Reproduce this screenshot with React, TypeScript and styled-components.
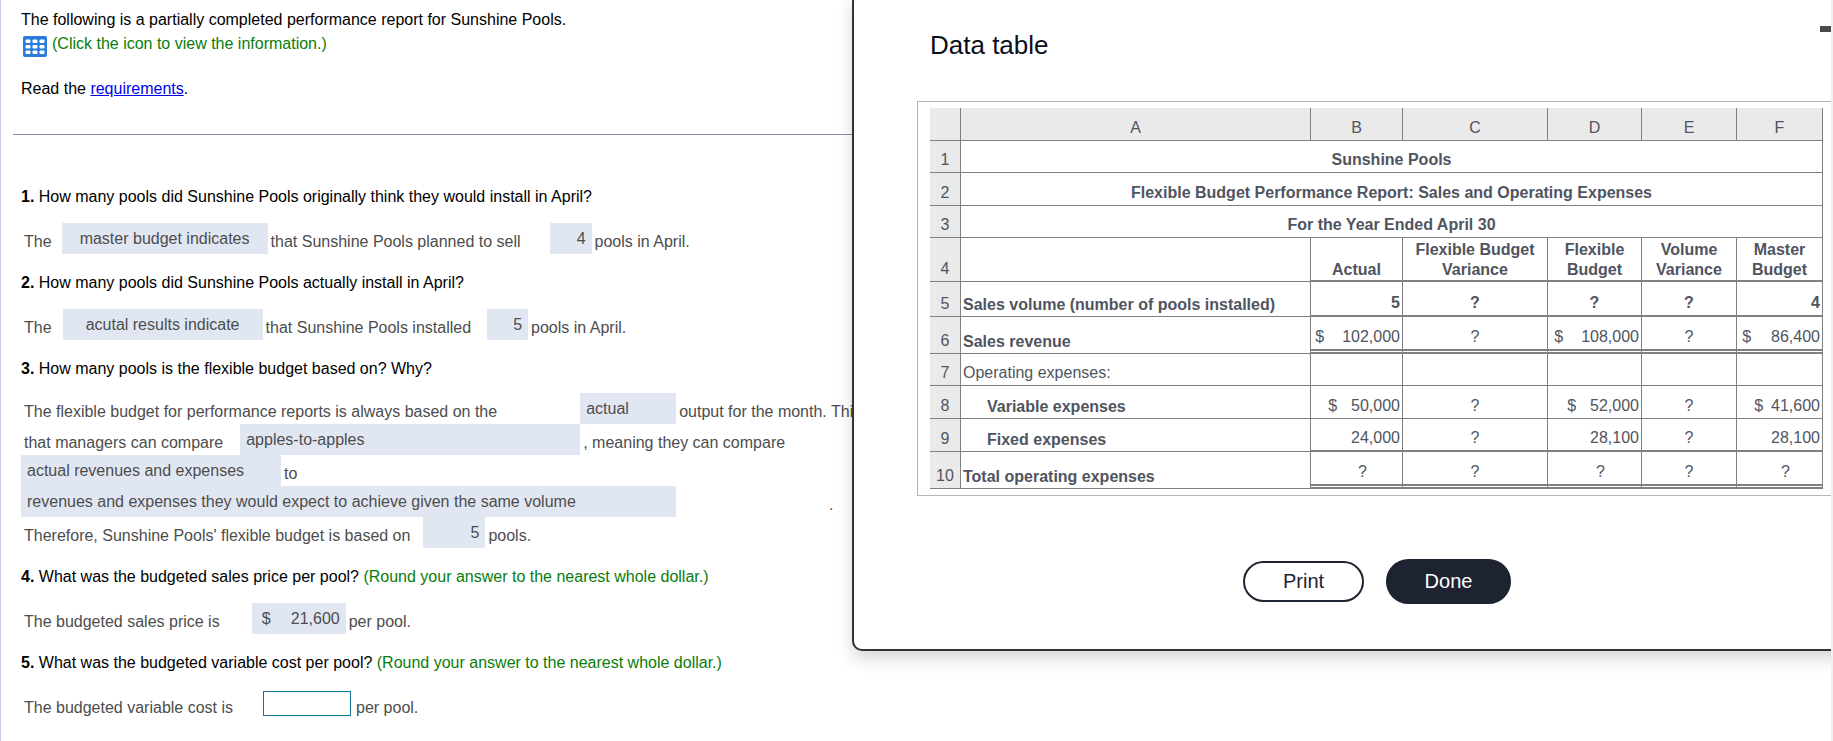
import React from "react";
import styled, { createGlobalStyle } from "styled-components";

const GlobalStyle = createGlobalStyle`
  *, *::before, *::after { box-sizing: border-box; }
  body {
    margin: 0;
    background: #fff;
    font-family: "Liberation Sans", Arial, Helvetica, sans-serif;
    font-size: 16px;
    line-height: 20px;
  }
`;

const Page = styled.div`
  position: relative;
  min-height: 100vh;
  overflow: hidden;
  border-left: 1px solid #c5cbdf;
  border-right: 2px solid #f1f1f1;
`;

const Worksheet = styled.main`
  padding: 10px 0 24px 12px;
  color: #000;
  white-space: nowrap;
`;

const Intro = styled.header`
  padding: 0 8px 35px;
  border-bottom: 1px solid #8a90a6;

  p {
    margin: 0;
  }
`;

const IconLine = styled.button`
  display: flex;
  gap: 5px;
  margin: 4px 0 22px;
  padding: 0 0 0 2px;
  border: 0;
  background: none;
  font: inherit;
  color: #0a7d0a;
  cursor: pointer;

  svg {
    margin-top: 2px;
  }
`;

const RequirementsLink = styled.a`
  color: #0000ee;
`;

const Questions = styled.section`
  padding: 33px 8px 0;
`;

const Question = styled.h2`
  margin: 19px 0 16px;
  font-size: 16px;
  font-weight: 400;
  line-height: 20px;
`;

const Hint = styled.span`
  color: #0a7d0a;
`;

const Answer = styled.div<{ $tight?: boolean }>`
  margin-top: ${(p) => (p.$tight ? "-2px" : "0")};
  color: #4d4d4d;
`;

const AnswerLine = styled.div`
  display: flex;
  height: 31px;
`;

const Words = styled.span`
  padding: 9px 3px 0;
`;

const Chip = styled.span<{ $w: number; $before?: number; $align?: string }>`
  display: flex;
  flex: none;
  justify-content: ${(p) => p.$align ?? "flex-start"};
  width: ${(p) => p.$w}px;
  margin-left: ${(p) => p.$before ?? 0}px;
  padding: 6px 6px 0;
  background: #e1e7f2;
`;

const AnswerInput = styled.input`
  width: 88px;
  height: 25px;
  margin: 2px 2px 0 27px;
  padding: 0 6px;
  border: 1px solid #147896;
  font: inherit;
  text-align: right;
`;

const Trailing = styled(Words)`
  margin-left: 150px;
`;

const Dialog = styled.section`
  position: absolute;
  top: -8px;
  left: 851px;
  right: -71px;
  padding: 36px 0 45px;
  border: 2px solid #333;
  border-radius: 10px;
  background: #fff;
  box-shadow: 0 8px 16px rgba(0, 0, 0, 0.16);
`;

const DialogHeader = styled.header`
  display: flex;
  justify-content: space-between;
  align-items: flex-start;
  padding: 0 60px 0 76px;

  h1 {
    margin: 0;
    font-size: 26px;
    font-weight: 400;
    line-height: 30px;
    color: #0a0e1c;
  }
`;

const MinimizeButton = styled.button`
  display: flex;
  margin: -4px 0 0;
  padding: 0;
  border: 0;
  background: none;
`;

const TableFrame = styled.div`
  margin: 41px 0 0 63px;
  padding: 6px 12px;
  border: 1px solid #b5b5b5;
`;

const Sheet = styled.table`
  table-layout: fixed;
  width: 893px;
  border-collapse: separate;
  border-spacing: 0;
  color: #505460;

  th,
  td {
    padding: 0 2px 2px;
    border: 0 solid #808080;
    border-width: 0 1px 1px 0;
    vertical-align: bottom;
    text-align: center;
    font-weight: 400;
  }
`;

const Row = styled.tr<{ $h: number }>`
  height: ${(p) => p.$h}px;
`;

const HeadCell = styled.th`
  && {
    background: #eaeaea;
  }
`;

const TitleCell = styled.td`
  && {
    font-weight: 700;
  }
`;

const LabelCell = styled.th<{ $bold?: boolean; $indent?: boolean }>`
  && {
    padding-bottom: ${(p) => (p.$bold ? 1 : 2)}px;
    padding-left: ${(p) => (p.$indent ? 26 : 2)}px;
    text-align: left;
    font-weight: ${(p) => (p.$bold ? 700 : 400)};
  }
`;

type Rule = "thin" | "thick" | "double";
const rules: Record<Rule, string> = {
  thin: "1px solid #808080",
  thick: "2px solid #808080",
  double: "5px double #808080",
};

const ValueCell = styled.td<{ $rule: Rule; $bold?: boolean; $shift?: boolean }>`
  && {
    border-bottom: ${(p) => rules[p.$rule]};
    font-weight: ${(p) => (p.$bold ? 700 : 400)};
    padding-left: ${(p) => (p.$shift ? 14 : 2)}px;
  }
`;

const ColumnTitle = styled(ValueCell)`
  && {
    padding-bottom: 0;
  }
`;

const Amount = styled.span<{ $gap: number }>`
  display: flex;
  justify-content: flex-end;
  gap: ${(p) => p.$gap}px;
`;

const Actions = styled.footer`
  display: flex;
  justify-content: center;
  align-items: center;
  gap: 22px;
  margin-top: 63px;
`;

const PillButton = styled.button<{ $primary?: boolean }>`
  width: ${(p) => (p.$primary ? 125 : 121)}px;
  height: ${(p) => (p.$primary ? 45 : 41)}px;
  padding: 0 0 2px;
  border: 2px solid #1d2330;
  border-radius: 23px;
  background: ${(p) => (p.$primary ? "#1d2330" : "#fff")};
  color: ${(p) => (p.$primary ? "#fff" : "#1d2330")};
  font: inherit;
  font-size: 20px;
`;

const GridIcon = () => (
  <svg width="24" height="21" viewBox="0 0 24 21" aria-hidden="true">
    <rect width="24" height="21" rx="2" fill="#2a7bdc" />
    {[3.5, 9, 14.5].map((y) =>
      [2.5, 9.5, 16.5].map((x) => (
        <rect key={`${x}-${y}`} x={x} y={y} width="5" height="3.5" rx="1" fill="#fff" />
      )),
    )}
  </svg>
);

type Value = string | { text: string; gap: number } | null;
interface SheetRow {
  label: string;
  height: number;
  rule: Rule;
  bold?: boolean;
  boldValues?: boolean;
  indent?: boolean;
  shift?: boolean;
  values: Value[];
}

const sheetRows: SheetRow[] = [
  { label: "Sales volume (number of pools installed)", height: 35, rule: "thick", bold: true, boldValues: true, values: ["5", "?", "?", "?", "4"] },
  {
    label: "Sales revenue", height: 37, rule: "double", bold: true,
    values: [{ text: "102,000", gap: 18 }, "?", { text: "108,000", gap: 18 }, "?", { text: "86,400", gap: 20 }],
  },
  { label: "Operating expenses:", height: 32, rule: "thin", values: [null, null, null, null, null] },
  {
    label: "Variable expenses", height: 33, rule: "thin", bold: true, indent: true,
    values: [{ text: "50,000", gap: 14 }, "?", { text: "52,000", gap: 14 }, "?", { text: "41,600", gap: 8 }],
  },
  { label: "Fixed expenses", height: 33, rule: "thick", bold: true, indent: true, values: ["24,000", "?", "28,100", "?", "28,100"] },
  { label: "Total operating expenses", height: 37, rule: "double", bold: true, shift: true, values: ["?", "?", "?", "?", "?"] },
];

const titles: [string, number][] = [
  ["Sunshine Pools", 32],
  ["Flexible Budget Performance Report: Sales and Operating Expenses", 33],
  ["For the Year Ended April 30", 32],
];

const columnWidths = [31, 350, 92, 145, 94, 95, 86];

function CellValue({ value }: { value: Value }) {
  if (value === null || value === "?") return <>{value}</>;
  if (typeof value === "string") return <Amount $gap={0}>{value}</Amount>;
  return (
    <Amount $gap={value.gap}>
      <span>$</span>
      <span>{value.text}</span>
    </Amount>
  );
}

function DataTable() {
  return (
    <Sheet>
      <colgroup>
        {columnWidths.map((w, i) => (
          <col key={i} width={w} />
        ))}
      </colgroup>
      <thead>
        <Row $h={33}>
          {["", "A", "B", "C", "D", "E", "F"].map((c) => (
            <HeadCell key={c} scope="col">{c}</HeadCell>
          ))}
        </Row>
      </thead>
      <tbody>
        {titles.map(([text, h], i) => (
          <Row key={text} $h={h}>
            <HeadCell scope="row">{i + 1}</HeadCell>
            <TitleCell colSpan={6}>{text}</TitleCell>
          </Row>
        ))}
        <Row $h={44}>
          <HeadCell scope="row">4</HeadCell>
          <td />
          {["Actual", "Flexible Budget Variance", "Flexible Budget", "Volume Variance", "Master Budget"].map((c) => (
            <ColumnTitle key={c} $rule="thick" $bold>{c}</ColumnTitle>
          ))}
        </Row>
        {sheetRows.map((r, i) => (
          <Row key={r.label} $h={r.height}>
            <HeadCell scope="row">{i + 5}</HeadCell>
            <LabelCell scope="row" $bold={r.bold} $indent={r.indent}>{r.label}</LabelCell>
            {r.values.map((v, j) => (
              <ValueCell key={j} $rule={r.rule} $bold={r.boldValues} $shift={r.shift && j % 2 === 0}>
                <CellValue value={v} />
              </ValueCell>
            ))}
          </Row>
        ))}
      </tbody>
    </Sheet>
  );
}

export default function App() {
  return (
    <Page>
      <GlobalStyle />
      <Worksheet>
        <Intro>
          <p>The following is a partially completed performance report for Sunshine Pools.</p>
          <IconLine type="button">
            <GridIcon />
            (Click the icon to view the information.)
          </IconLine>
          <p>
            Read the <RequirementsLink href="#requirements">requirements</RequirementsLink>.
          </p>
        </Intro>

        <Questions>
          <Question><b>1.</b> How many pools did Sunshine Pools originally think they would install in April?</Question>
          <Answer>
            <AnswerLine>
              <Words>The</Words>
              <Chip $w={206} $before={7} $align="center">master budget indicates</Chip>
              <Words>that Sunshine Pools planned to sell</Words>
              <Chip $w={42} $before={26} $align="flex-end">4</Chip>
              <Words>pools in April.</Words>
            </AnswerLine>
          </Answer>

          <Question><b>2.</b> How many pools did Sunshine Pools actually install in April?</Question>
          <Answer>
            <AnswerLine>
              <Words>The</Words>
              <Chip $w={200} $before={8} $align="center">acutal results indicate</Chip>
              <Words>that Sunshine Pools installed</Words>
              <Chip $w={41} $before={13} $align="flex-end">5</Chip>
              <Words>pools in April.</Words>
            </AnswerLine>
          </Answer>

          <Question><b>3.</b> How many pools is the flexible budget based on? Why?</Question>
          <Answer $tight>
            <AnswerLine>
              <Words>The flexible budget for performance reports is always based on the</Words>
              <Chip $w={96} $before={80}>actual</Chip>
              <Words>output for the month. This is so</Words>
            </AnswerLine>
            <AnswerLine>
              <Words>that managers can compare</Words>
              <Chip $w={340} $before={14}>apples-to-apples</Chip>
              <Words>, meaning they can compare</Words>
            </AnswerLine>
            <AnswerLine>
              <Chip $w={260}>actual revenues and expenses</Chip>
              <Words>to</Words>
            </AnswerLine>
            <AnswerLine>
              <Chip $w={655}>revenues and expenses they would expect to achieve given the same volume</Chip>
              <Trailing>.</Trailing>
            </AnswerLine>
            <AnswerLine>
              <Words>Therefore, Sunshine Pools' flexible budget is based on</Words>
              <Chip $w={62} $before={10} $align="flex-end">5</Chip>
              <Words>pools.</Words>
            </AnswerLine>
          </Answer>

          <Question>
            <b>4.</b> What was the budgeted sales price per pool? <Hint>(Round your answer to the nearest whole dollar.)</Hint>
          </Question>
          <Answer>
            <AnswerLine>
              <Words>The budgeted sales price is</Words>
              <Chip $w={94} $before={29} $align="flex-end">
                <Amount $gap={20}><span>$</span><span>21,600</span></Amount>
              </Chip>
              <Words>per pool.</Words>
            </AnswerLine>
          </Answer>

          <Question>
            <b>5.</b> What was the budgeted variable cost per pool? <Hint>(Round your answer to the nearest whole dollar.)</Hint>
          </Question>
          <Answer>
            <AnswerLine>
              <Words as="label" htmlFor="variable-cost">The budgeted variable cost is</Words>
              <AnswerInput id="variable-cost" type="text" />
              <Words>per pool.</Words>
            </AnswerLine>
          </Answer>
        </Questions>
      </Worksheet>

      <Dialog role="dialog" aria-labelledby="dialog-title">
        <DialogHeader>
          <h1 id="dialog-title">Data table</h1>
          <MinimizeButton type="button" aria-label="Minimize">
            <svg width="20" height="6" viewBox="0 0 20 6" aria-hidden="true">
              <rect width="20" height="6" fill="#4a4a4a" />
            </svg>
          </MinimizeButton>
        </DialogHeader>
        <TableFrame>
          <DataTable />
        </TableFrame>
        <Actions>
          <PillButton type="button">Print</PillButton>
          <PillButton type="button" $primary>Done</PillButton>
        </Actions>
      </Dialog>
    </Page>
  );
}
